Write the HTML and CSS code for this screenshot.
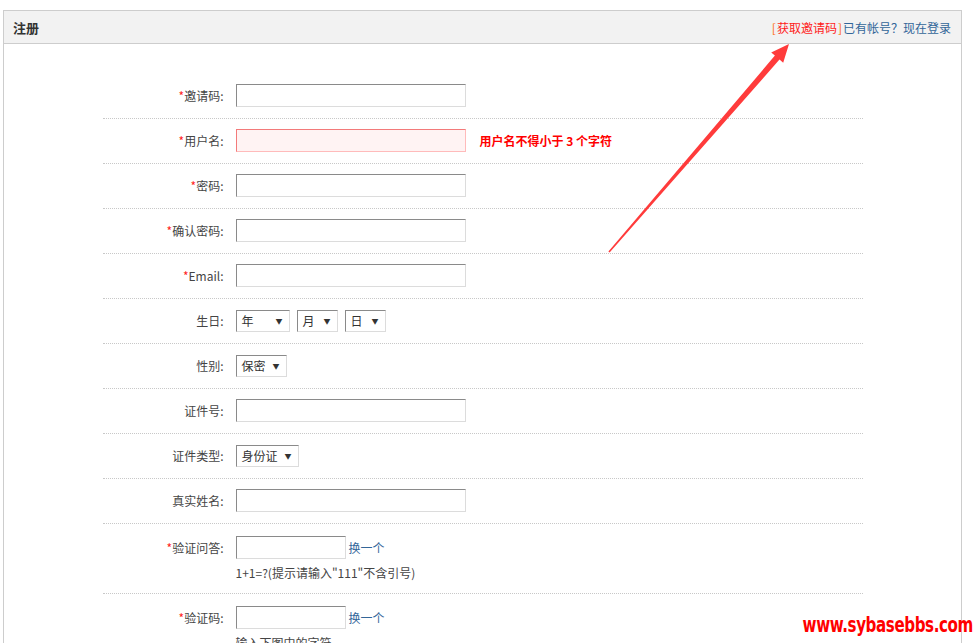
FILE: index.html
```html
<!DOCTYPE html>
<html lang="zh-CN">
<head>
  <meta charset="UTF-8" />
  <title>注册</title>
  <link rel="stylesheet" href="styles.css">
</head>
<body>

  <div class="box">
    <div class="box-head">
      <h2>注册</h2>
      <div class="head-links">
        <a href="#" class="get-code"><span class="br">[</span>获取邀请码<span class="br">]</span></a><a href="#">已有帐号？现在登录</a>
      </div>
    </div>

    <form class="reg-form">
      <div class="row">
        <label><em>*</em>邀请码:</label>
        <div class="field"><input type="text" class="txt"></div>
      </div>
      <div class="row">
        <label><em>*</em>用户名:</label>
        <div class="field"><input type="text" class="txt error"><span class="err-msg">用户名不得小于 3 个字符</span></div>
      </div>
      <div class="row">
        <label><em>*</em>密码:</label>
        <div class="field"><input type="password" class="txt"></div>
      </div>
      <div class="row">
        <label><em>*</em>确认密码:</label>
        <div class="field"><input type="password" class="txt"></div>
      </div>
      <div class="row">
        <label><em>*</em>Email:</label>
        <div class="field"><input type="text" class="txt"></div>
      </div>
      <div class="row">
        <label>生日:</label>
        <div class="field">
          <span class="sel w54">年<i>▼</i></span>
          <span class="sel w41">月<i>▼</i></span>
          <span class="sel w41">日<i>▼</i></span>
        </div>
      </div>
      <div class="row">
        <label>性别:</label>
        <div class="field"><span class="sel w51">保密<i>▼</i></span></div>
      </div>
      <div class="row">
        <label>证件号:</label>
        <div class="field"><input type="text" class="txt"></div>
      </div>
      <div class="row">
        <label>证件类型:</label>
        <div class="field"><span class="sel w63">身份证<i>▼</i></span></div>
      </div>
      <div class="row">
        <label>真实姓名:</label>
        <div class="field"><input type="text" class="txt"></div>
      </div>
      <div class="row tall">
        <label><em>*</em>验证问答:</label>
        <div class="field">
          <input type="text" class="txt short"><a href="#" class="change">换一个</a>
          <p class="tip">1+1=?(提示请输入"111"不含引号)</p>
        </div>
      </div>
      <div class="row tall">
        <label><em>*</em>验证码:</label>
        <div class="field">
          <input type="text" class="txt short"><a href="#" class="change">换一个</a>
          <p class="tip">输入下图中的字符</p>
        </div>
      </div>
    </form>
  </div>

  <!-- annotation arrow drawn on the screenshot -->
  <svg class="arrow" width="979" height="643" viewBox="0 0 979 643">
    <polygon fill="#ff3b3b" points="608.4,251.6 774.9,55.6 771.2,52.4 789,44 783.2,62.8 779.5,59.6 609.6,252.4" />
  </svg>

  <div class="watermark">www.sybasebbs.com</div>

</body>
</html>
```

FILE: styles.css
```css
body {
  margin: 0;
  font-family: "Noto Sans CJK SC", "Noto Sans", sans-serif;
  font-size: 12px;
  color: #444;
  height: 643px;
  overflow: hidden;
  position: relative;
  background: #fff;
}

a {
  color: #336699;
  text-decoration: none;
}

.box {
  margin: 10px 0 0 3px;
  width: 959px;
  border: 1px solid #cdcdcd;
  border-bottom: none;
  box-sizing: border-box;
  height: 700px;
}

.box-head {
  height: 32px;
  background: #f2f2f2;
  border-bottom: 1px solid #cdcdcd;
  display: flex;
  align-items: center;
  justify-content: space-between;
  padding: 0 10px 0 9px;
}

.box-head h2 {
  margin: 0;
  font-size: 13px;
  font-weight: bold;
  color: #333;
}

.head-links {
  display: flex;
  align-items: center;
}

.get-code {
  color: #ff1a1a;
}

.get-code .br {
  color: #ff6a00;
  padding: 0 1px;
}

.reg-form {
  width: 760px;
  margin: 0 auto;
  padding-top: 30px;
}

.row {
  display: grid;
  grid-template-columns: 121px 1fr;
  column-gap: 12px;
  padding: 10px 0 11px;
  border-bottom: 1px dotted #c8c8c8;
  align-items: start;
}

.row.tall {
  padding: 12px 0 11px;
}

.row label {
  text-align: right;
  line-height: 23px;
  color: #444;
}

.row label em {
  font-style: normal;
  color: #f22;
}

.field {
  display: flex;
  flex-wrap: wrap;
  align-items: center;
  gap: 0 7px;
  min-height: 23px;
}

.txt {
  width: 230px;
  height: 23px;
  box-sizing: border-box;
  margin: 0;
  padding: 0 4px;
  border: 1px solid;
  border-color: #8a8a8a #dcdcdc #dcdcdc #8a8a8a;
  background: #fff;
  font: inherit;
  outline: none;
}

.txt.error {
  background: #fff3f3;
  border-color: #f37a7a #fbb #fbb #f37a7a;
}

.txt.short {
  width: 110px;
}

.err-msg {
  margin-left: 7px;
  color: #f00;
  font-weight: bold;
}

.change {
  margin-left: -4px;
  line-height: 23px;
}

.tip {
  flex-basis: 100%;
  margin: 5px 0 0;
  line-height: 18px;
  color: #444;
}

.sel {
  display: inline-flex;
  align-items: center;
  justify-content: space-between;
  height: 22px;
  box-sizing: border-box;
  padding: 0 6px 0 5px;
  border: 1px solid;
  border-color: #8a8a8a #dcdcdc #dcdcdc #8a8a8a;
  color: #333;
}

.sel i {
  font-style: normal;
  font-size: 7px;
  color: #333;
}

.w54 { width: 54px; }
.w41 { width: 41px; }
.w51 { width: 51px; }
.w63 { width: 63px; }

.arrow {
  position: absolute;
  left: 0;
  top: 0;
  pointer-events: none;
}

.watermark {
  position: absolute;
  right: 6px;
  top: 613px;
  font-family: "DejaVu Sans Condensed", "DejaVu Sans", sans-serif;
  font-weight: bold;
  font-size: 21px;
  color: #ff0000;
  letter-spacing: -0.5px;
  transform: scaleX(0.8);
  transform-origin: right center;
}
```
